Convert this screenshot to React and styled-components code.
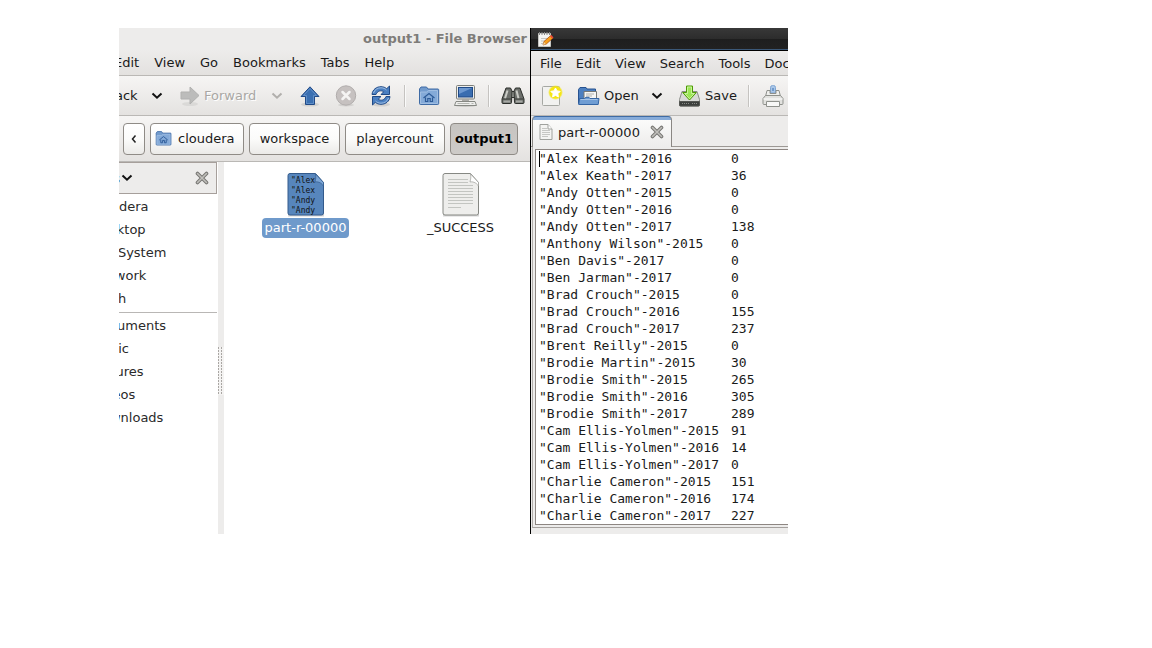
import React from "react";
import styled, { createGlobalStyle, css } from "styled-components";

const GlobalStyle = createGlobalStyle`
  * { box-sizing: border-box; }
  body { margin: 0; background: #fff; }
  body, button, textarea { font-family: "DejaVu Sans", sans-serif; font-size: 13px; color: #1a1a1a; }
  button { border: 0; padding: 0; margin: 0; background: none; white-space: nowrap; }
  svg { display: block; flex: none; }
`;

const Page = styled.main`
  padding: 28px 364px 28px 119px;
`;

const Desktop = styled.div`
  display: grid;
  grid-template-columns: 411px minmax(0, 1fr);
  overflow: hidden;
`;

const Pane = styled.section`
  display: flex;
  flex-direction: column;
  min-width: 0;
  background: #edeceb;
`;

const FilePane = styled(Pane)`
  margin-left: -28px;
  overflow: hidden;
`;

const EditorPane = styled(Pane)`
  border-left: 1px solid #000;
  overflow: hidden;
`;

const FileTitle = styled.h1`
  margin: 0;
  height: 22px;
  padding-left: 272px;
  font-size: 13px;
  line-height: 21px;
  font-weight: bold;
  color: #7e7c79;
  white-space: nowrap;
`;

const EditorTitle = styled.header`
  height: 23px;
  padding: 3px 0 0 6px;
  background: linear-gradient(#383838, #2c2c2c 50%, #1e1e1e 51%, #222);
  border-bottom: 1px solid #000;
  box-shadow: inset 0 -1px #3b5878;
`;

const MenuBar = styled.nav`
  display: flex;
  align-items: center;
  gap: ${(p) => p.$gap}px;
  height: ${(p) => p.$h}px;
  padding-top: 1px;
  padding-left: ${(p) => p.$left}px;
  background: linear-gradient(#edeceb, #e3e1df);
  border-bottom: 1px solid #bab8b5;
`;

const MenuItem = styled.button`
  flex: none;
  line-height: 16px;
`;

const Toolbar = styled.div`
  display: flex;
  align-items: center;
  height: 40px;
  padding-left: ${(p) => p.$left || 0}px;
  background: linear-gradient(#f6f5f4, #e4e2e0);
  border-bottom: 1px solid #bab8b5;
`;

const ToolButton = styled.button`
  display: flex;
  align-items: center;
  gap: 4px;
  flex: none;
  height: 36px;
  width: ${(p) => p.$w || 36}px;
  padding-left: ${(p) => p.$pad || 0}px;
  justify-content: ${(p) => (p.$pad ? "flex-start" : "center")};
  ${(p) => p.disabled && css`
    color: #a9a7a4;
    text-shadow: 1px 1px #fff;
  `}
`;

const Divider = styled.span`
  flex: none;
  width: 2px;
  height: 22px;
  margin: 0 5px;
  border-left: 1px solid #c5c3c0;
  border-right: 1px solid #fafafa;
`;

const PathBar = styled.nav`
  display: flex;
  align-items: center;
  gap: 5px;
  height: 46px;
  padding-left: 32px;
  background: linear-gradient(#f6f5f4, #e4e2e0);
  border-bottom: 1px solid #bab8b5;
`;

const PathButton = styled.button`
  display: flex;
  align-items: center;
  justify-content: ${(p) => (p.$folder ? "flex-start" : "center")};
  gap: 6px;
  flex: none;
  width: ${(p) => p.$w}px;
  height: 32px;
  padding-left: ${(p) => (p.$folder ? 4 : 0)}px;
  border: 1px solid #8f8b86;
  border-radius: 4px;
  background: linear-gradient(#fff, #fbfbfa 50%, #ebeae8);
  ${(p) => p.$active && css`
    font-weight: bold;
    color: #000;
    background: linear-gradient(#c6c4c1, #cecbc8);
  `}
`;

const Body = styled.div`
  display: flex;
  flex: 1;
  min-height: 372px;
  background: #fff;
`;

const Sidebar = styled.aside`
  width: 126px;
  flex: none;
`;

const SideHeader = styled.div`
  display: flex;
  align-items: center;
  justify-content: space-between;
  height: 32px;
  padding-right: 7px;
  background: #edeceb;
  border: 1px solid #a69f9b;
  border-left: 0;
`;

const PlacesButton = styled.button`
  display: flex;
  align-items: center;
  justify-content: flex-end;
  width: 42px;
  gap: 1px;
`;

const PlaceList = styled.ul`
  list-style: none;
  margin: 0;
  padding: 1px 0 2px 1px;
  & + & { border-top: 1px solid #b9b7b5; }
`;

const Place = styled.li`
  height: 23px;
  line-height: 24px;
`;

const PlaceLink = styled.a`
  color: #2a2a2a;
  text-decoration: none;
  white-space: nowrap;
`;

const Splitter = styled.div`
  display: flex;
  align-items: center;
  width: 7px;
  flex: none;
  padding: 46px 0 0 1px;
  background: linear-gradient(90deg, #fff 1px, #edeceb 1px);
`;

const Grip = styled.span`
  width: 6px;
  height: 48px;
  background: conic-gradient(#f4f3f2 75%, #a9a6a3 0) 0 0 / 3px 3px;
`;

const Files = styled.div`
  display: flex;
  align-items: flex-start;
  flex: 1;
  min-width: 0;
  overflow: hidden;
  padding: 11px 0 0 4px;
`;

const FileItem = styled.button`
  display: flex;
  flex-direction: column;
  align-items: center;
  flex: none;
  width: 155px;
`;

const FileLabel = styled.span`
  height: 20px;
  padding: 0 3px;
  line-height: 19px;
  border-radius: 4px;
  ${(p) => p.$selected && css`
    color: #fff;
    background: #6f9acb;
  `}
`;

const TabStrip = styled.div`
  display: flex;
  height: 31px;
  padding-left: 1px;
  border-bottom: 1px solid #9c9894;
`;

const Tab = styled.div`
  display: flex;
  align-items: center;
  gap: 5px;
  width: 140px;
  height: 31px;
  padding: 0 7px 0 6px;
  border: 1px solid #8a8783;
  border-top: 1px solid #3f6ba3;
  border-bottom: 0;
  border-radius: 4px 4px 0 0;
  background: linear-gradient(#86abd9 3px, #fbfbfa 3px, #edeceb);
`;

const TabTitle = styled.button`
  flex: 1;
  text-align: left;
`;

const EditorFrame = styled.div`
  flex: 1;
  margin-left: 1px;
  padding: 2px 0 2px 2px;
  border-left: 1px solid #b3afac;
  border-bottom: 1px solid #a5a19e;
  background: #edeceb;
`;

const TextBox = styled.textarea`
  display: block;
  width: 100%;
  height: 376px;
  padding: 0 0 0 3px;
  border: 1px solid #8d8682;
  border-right: 0;
  border-radius: 0;
  outline: 0;
  resize: none;
  overflow: hidden;
  white-space: pre;
  font-family: "DejaVu Sans Mono", monospace;
  font-size: 13px;
  line-height: 17px;
  tab-size: 192px;
  background: #fff linear-gradient(#000, #000) 3px 1px / 1px 16px no-repeat;
`;

const StatusBar = styled.footer`
  height: 6px;
  background: #edeceb;
`;

const Chevron = ({ color = "#111" }) => (
  <svg width="12" height="8" viewBox="0 0 12 8" fill="none" stroke={color} strokeWidth="2">
    <path d="M1.5 1.5 6 5.7 10.5 1.5" />
  </svg>
);

const CloseIcon = () => (
  <svg width="14" height="14" viewBox="0 0 14 14" strokeLinecap="round">
    <path d="M2.5 2.5 11.5 11.5M11.5 2.5 2.5 11.5" stroke="#777673" strokeWidth="3.600" />
    <path d="M2.5 2.5 11.5 11.5M11.5 2.5 2.5 11.5" stroke="#c0bfbb" strokeWidth="1.600" />
  </svg>
);

const ForwardIcon = () => (
  <svg width="20" height="22" viewBox="0 0 20 22">
    <ellipse cx="10" cy="19" rx="8" ry="2" fill="#dad9d7" />
    <path d="M1 7h9V2l9 8.5-9 8.5v-5H1z" fill="#bcbcbb" stroke="#b1b1b0" />
  </svg>
);

const UpIcon = () => (
  <svg width="22" height="22" viewBox="0 0 22 22">
    <ellipse cx="11" cy="19.5" rx="9" ry="2" fill="#d2d1cf" />
    <path d="M11 1.800 20 11.500h-4.500v8h-9v-8H2z" fill="#3b70b2" stroke="#204a87" strokeLinejoin="round" />
    <path d="M11 3.500 17.500 10.500h-3v8h-7v-8h-3z" fill="none" stroke="#6b97cd" strokeWidth=".8" />
  </svg>
);

const StopIcon = () => (
  <svg width="22" height="22" viewBox="0 0 22 22">
    <ellipse cx="11" cy="20" rx="8" ry="1.500" fill="#d4d2d0" />
    <circle cx="11" cy="10.500" r="9.700" fill="#c6c1c0" stroke="#b0acab" />
    <path d="m7.500 7 7 7m0-7-7 7" stroke="#f5f4f3" strokeWidth="2.500" strokeLinecap="round" />
  </svg>
);

const ReloadIcon = () => (
  <svg width="22" height="22" viewBox="0 0 22 22" strokeLinejoin="round">
    <ellipse cx="11" cy="19.500" rx="9" ry="2" fill="#d2d0ce" />
    <g fill="#4a7fc1" stroke="#204a87">
      <path d="M2 9.500C2.500 4.500 6.500 1.700 11 1.700c2.500 0 4.300.8 5.700 2L19.500 1v8.500H11l2.700-2.700c-2.700-1.900-6.200-1-7.700 2.700z" />
      <path d="M20 11.500c-.5 5-4.500 7.800-9 7.800-2.500 0-4.300-.8-5.700-2L2.500 20v-8.500H11l-2.700 2.700c2.700 1.900 6.200 1 7.700-2.700z" />
    </g>
    <path d="M3.500 8C4.500 4.500 8 2.800 11 2.800c2.500 0 4 .9 5.500 2.200M18.500 13c-1 3.500-4.500 5.200-7.500 5.200-2.500 0-4-.9-5.500-2.200" fill="none" stroke="#a9c5e6" strokeWidth=".9" />
  </svg>
);

const HomeFolderIcon = ({ size = 22 }) => (
  <svg width={size} height={size} viewBox="0 0 22 22">
    <path d="M1.500 18.500V4l1.500-2h5.500l1.500 2H20a.8.8 0 0 1 .7.800v13.700a1 1 0 0 1-1 1H2.500a1 1 0 0 1-1-1z" fill="#729bcd" stroke="#3f6ba5" />
    <path d="M2.500 7h6l2-1.500h9v13h-17z" fill="#84aad8" stroke="#a9c5e6" strokeWidth=".8" />
    <path d="m5.500 13 5.500-4.500 5.500 4.500M7.500 12.500v4h2.300v-3h2.400v3h2.300v-4" fill="none" stroke="#2c5a97" strokeWidth="1.200" />
  </svg>
);

const ComputerIcon = () => (
  <svg width="23" height="22" viewBox="0 0 23 22">
    <ellipse cx="11.500" cy="20.500" rx="11" ry="1.400" fill="#c9c8c5" />
    <rect x="2.500" y=".5" width="18" height="13.500" rx="1" fill="#eeeeec" stroke="#7c7e79" />
    <rect x="4.500" y="2.500" width="14" height="9.500" fill="#3a6db0" stroke="#204a87" />
    <path d="M5 3h13L5 9z" fill="#6d98d0" />
    <path d="M8 14h7v2H8z" fill="#aaa9a6" />
    <path d="M2 16.500h19l1.500 4H.5z" fill="#eeeeec" stroke="#868883" />
    <path d="M3.500 18.500h12m2 0h2" stroke="#b3b5b0" />
  </svg>
);

const BinocularsIcon = () => (
  <svg width="24" height="20" viewBox="0 0 24 20" stroke="#2b2e2b">
    <path d="M9.500 5.500h5v6h-5z" fill="#a2a59f" />
    <path d="M5 2h4.500l1.500 3-.5 11.500a1 1 0 0 1-1 1H2a1 1 0 0 1-1-1V13z" fill="#6d706c" />
    <path d="M19 2h-4.500L13 5l.5 11.500a1 1 0 0 0 1 1H22a1 1 0 0 0 1-1V13z" fill="#6d706c" />
    <path d="M6.500 4.500 4 12.500M15.500 4.500l2 8" stroke="#c9cbc6" strokeWidth="2" />
    <path d="M2.500 15.500h6.500m6 0h6.500" stroke="#a6a8a4" strokeWidth="2" />
    <path d="M1.500 13h9m3 0h9" strokeWidth=".8" />
  </svg>
);

const NotepadIcon = () => (
  <svg width="17" height="17" viewBox="0 0 17 17">
    <path d="M1.500 2.500h12V15.500h-12z" fill="#f4f4f2" stroke="#c5c5c1" />
    <path d="M2.500 1v3M5 1v3M7.500 1v3M10 1v3M12.500 1v3" stroke="#888" />
    <path d="M4 7.500h8M4 10h5M4 12.500h4" stroke="#c5c5c1" />
    <path d="m6 14 1-3.500 6.500-5.800 2.300 2.500L9.300 13z" fill="#f9a01c" stroke="#a34505" strokeWidth=".7" />
    <path d="m13 5.200 1.400-1.200 2.100 2.500L15.300 7.600z" fill="#ef4a38" />
    <path d="m6 14 1-3 1.800 1.900z" fill="#f3d5a0" />
  </svg>
);

const NewIcon = () => (
  <svg width="22" height="22" viewBox="0 0 22 22">
    <defs>
      <radialGradient id="glow">
        <stop offset=".75" stopColor="#f5e614" />
        <stop offset="1" stopColor="#f5e614" stopOpacity="0" />
      </radialGradient>
    </defs>
    <rect x="1.500" y="1.500" width="17" height="19" rx="1" fill="#f2f2f0" stroke="#a6a8a3" />
    <circle cx="14.500" cy="7.500" r="7.500" fill="url(#glow)" />
    <path d="m14.500 3 1.500 2.900 3.200.5-2.300 2.300.5 3.200-2.900-1.500-2.900 1.500.5-3.200-2.300-2.300 3.200-.5z" fill="#fff" stroke="#fff" strokeLinejoin="round" />
  </svg>
);

const OpenIcon = () => (
  <svg width="23" height="20" viewBox="0 0 23 20">
    <path d="M1.500 17.500v-14l1.500-2h6l1 1.500h8.500v14z" fill="#4c7fc0" stroke="#27528f" />
    <path d="M7 5.500h12.500V14H7z" fill="#f6f6f4" stroke="#777975" />
    <path d="M9 8h8M9 10h6" stroke="#b0b1ae" />
    <path d="M1.700 18.500 2.500 12.500h5l1.500-1.200h3l1 1.200h9l-.8 6z" fill="#6f9dd3" stroke="#3465a4" />
    <path d="M3.500 13.500h17" fill="none" stroke="#a5c3e6" />
  </svg>
);

const SaveIcon = () => (
  <svg width="23" height="22" viewBox="0 0 23 22">
    <path d="M4 6.500h15l2.500 8v5.500a1 1 0 0 1-1 1h-18a1 1 0 0 1-1-1v-5.500z" fill="#d8d9d6" stroke="#8a8c87" />
    <path d="M1.500 16.500h20v3.500a1 1 0 0 1-1 1h-18a1 1 0 0 1-1-1z" fill="#3c3f3d" stroke="#555753" />
    <path d="M4 18.500h8m2 0h6" stroke="#888a85" strokeDasharray="1 1" />
    <path d="M8.500 1h6v6.500h3.800L11.500 15 4.700 7.500h3.800z" fill="#9be655" stroke="#4e9a06" strokeLinejoin="round" />
    <path d="M9.500 2h4v6.500h2.800l-4.800 5.200L6.700 8.500h2.800z" fill="none" stroke="#d4f7ac" strokeWidth=".8" />
  </svg>
);

const PrinterIcon = () => (
  <svg width="22" height="22" viewBox="0 0 22 22">
    <path d="M8.500 8V2.500a2 2 0 0 1 2-2h1a2 2 0 0 1 2 2V8z" fill="#a9c6e8" stroke="#7fa5d2" />
    <path d="M11 3v3" stroke="#3a6eaf" />
    <path d="M5 5.500h3v3h6v-3h3l1.500 6h-15z" fill="#efefed" stroke="#8f918c" />
    <path d="M3.500 10.500h15l2.500 3v5a1 1 0 0 1-1 1H2a1 1 0 0 1-1-1v-5z" fill="#e2e2df" stroke="#8f918c" />
    <path d="M1.500 14h19" stroke="#fff" />
    <path d="M4.500 16.500h13v5h-13z" fill="#f8f8f7" stroke="#8f918c" />
  </svg>
);

const SmallDocIcon = () => (
  <svg width="14" height="16" viewBox="0 0 14 16">
    <path d="M1 .5h8L13 5v10.500H1z" fill="#f4f4f2" stroke="#a0a29e" />
    <path d="M9 .5V5h4" fill="#fff" stroke="#a0a29e" />
    <path d="M3 4.500h5M3 6.500h8M3 8.500h8M3 10.500h8M3 12.500h6" stroke="#c6c7c4" />
  </svg>
);

const DocumentIcon = ({ selected, lines }) => (
  <svg width="38" height="45" viewBox="0 0 38 45">
    <path d="M1 40h36v3.500H1z" fill="#bbb" opacity=".6" />
    <path d="M3 .5h25.500l8 9V40a2 2 0 0 1-2 2H3a2 2 0 0 1-2-2V2.500a2 2 0 0 1 2-2z" fill={selected ? "#5786bd" : "#eeeeec"} stroke={selected ? "#345b8c" : "#868883"} />
    <path d="M28.500 1c1 4-.5 7-.5 8 2-.5 6 0 8.500 4V9.500z" fill={selected ? "#7ba5d5" : "#fff"} stroke={selected ? "#345b8c" : "#9c9e99"} strokeWidth=".7" />
    {lines ? (
      <g fontFamily="DejaVu Sans Mono, monospace" fontSize="8" fill="#111">
        {lines.map((t, i) => <text key={i} x="4" y={10 + i * 10}>{t}</text>)}
      </g>
    ) : (
      <path d="M6 6.500h20M6 9.500h20M6 12.500h25M6 15.500h25M6 18.500h25M6 21.500h25M6 24.500h25M6 27.500h25M6 30.500h25M6 34.500h13" stroke="#c3c5c1" />
    )}
  </svg>
);

const rows = [
  ["Alex Keath", 2016, 0], ["Alex Keath", 2017, 36],
  ["Andy Otten", 2015, 0], ["Andy Otten", 2016, 0], ["Andy Otten", 2017, 138],
  ["Anthony Wilson", 2015, 0], ["Ben Davis", 2017, 0], ["Ben Jarman", 2017, 0],
  ["Brad Crouch", 2015, 0], ["Brad Crouch", 2016, 155], ["Brad Crouch", 2017, 237],
  ["Brent Reilly", 2015, 0], ["Brodie Martin", 2015, 30],
  ["Brodie Smith", 2015, 265], ["Brodie Smith", 2016, 305], ["Brodie Smith", 2017, 289],
  ["Cam Ellis-Yolmen", 2015, 91], ["Cam Ellis-Yolmen", 2016, 14], ["Cam Ellis-Yolmen", 2017, 0],
  ["Charlie Cameron", 2015, 151], ["Charlie Cameron", 2016, 174], ["Charlie Cameron", 2017, 227],
];

const fileText = rows
  .map(([name, year, count]) => `"${name}"-${year}\t${count}`)
  .join("\n");

const places = [
  ["cloudera", "Desktop", "File System", "Network", "Trash"],
  ["Documents", "Music", "Pictures", "Videos", "Downloads"],
];

function FileBrowser() {
  return (
    <FilePane>
      <FileTitle>output1 - File Browser</FileTitle>
      <MenuBar $h={26} $left={23} $gap={15}>
        {["Edit", "View", "Go", "Bookmarks", "Tabs", "Help"].map((m) => <MenuItem key={m}>{m}</MenuItem>)}
      </MenuBar>
      <Toolbar>
        <ToolButton $w={51} $pad={15}>Back</ToolButton>
        <ToolButton $w={30} aria-label="Back history"><Chevron /></ToolButton>
        <ToolButton $w={90} $pad={8} disabled><ForwardIcon />Forward</ToolButton>
        <ToolButton $w={30} disabled aria-label="Forward history"><Chevron color="#b1afac" /></ToolButton>
        <ToolButton aria-label="Up"><UpIcon /></ToolButton>
        <ToolButton $w={35} disabled aria-label="Stop"><StopIcon /></ToolButton>
        <ToolButton aria-label="Reload"><ReloadIcon /></ToolButton>
        <Divider />
        <ToolButton aria-label="Home"><HomeFolderIcon /></ToolButton>
        <ToolButton aria-label="Computer"><ComputerIcon /></ToolButton>
        <Divider />
        <ToolButton aria-label="Search"><BinocularsIcon /></ToolButton>
      </Toolbar>
      <PathBar>
        <PathButton $w={22} aria-label="Scroll left">
          <svg width="6" height="10" viewBox="0 0 6 10" fill="none" stroke="#222" strokeWidth="1.500"><path d="M4.500 1.500 1.500 5l3 3.500" /></svg>
        </PathButton>
        <PathButton $w={94} $folder><HomeFolderIcon size={17} />cloudera</PathButton>
        <PathButton $w={91}>workspace</PathButton>
        <PathButton $w={100}>playercount</PathButton>
        <PathButton $w={68} $active>output1</PathButton>
      </PathBar>
      <Body>
        <Sidebar>
          <SideHeader>
            <PlacesButton>Places<Chevron /></PlacesButton>
            <button aria-label="Close sidebar"><CloseIcon /></button>
          </SideHeader>
          {places.map((group) => (
            <PlaceList key={group[0]}>
              {group.map((p) => <Place key={p}><PlaceLink href="#">{p}</PlaceLink></Place>)}
            </PlaceList>
          ))}
        </Sidebar>
        <Splitter><Grip /></Splitter>
        <Files>
          <FileItem>
            <DocumentIcon selected lines={['"Alex', '"Alex', '"Andy', '"Andy']} />
            <FileLabel $selected>part-r-00000</FileLabel>
          </FileItem>
          <FileItem>
            <DocumentIcon />
            <FileLabel>_SUCCESS</FileLabel>
          </FileItem>
        </Files>
      </Body>
    </FilePane>
  );
}

function Editor() {
  return (
    <EditorPane>
      <EditorTitle><NotepadIcon /></EditorTitle>
      <MenuBar $h={25} $left={9} $gap={14}>
        {["File", "Edit", "View", "Search", "Tools", "Documents"].map((m) => <MenuItem key={m}>{m}</MenuItem>)}
      </MenuBar>
      <Toolbar $left={3}>
        <ToolButton aria-label="New"><NewIcon /></ToolButton>
        <ToolButton $w={72} $pad={7}><OpenIcon />Open</ToolButton>
        <ToolButton $w={30} aria-label="Recent files"><Chevron /></ToolButton>
        <ToolButton $w={71} $pad={6}><SaveIcon />Save</ToolButton>
        <Divider />
        <ToolButton aria-label="Print"><PrinterIcon /></ToolButton>
      </Toolbar>
      <TabStrip>
        <Tab>
          <SmallDocIcon />
          <TabTitle>part-r-00000</TabTitle>
          <button aria-label="Close tab"><CloseIcon /></button>
        </Tab>
      </TabStrip>
      <EditorFrame>
        <TextBox aria-label="part-r-00000" readOnly wrap="off" value={fileText} />
      </EditorFrame>
      <StatusBar />
    </EditorPane>
  );
}

export default function App() {
  return (
    <>
      <GlobalStyle />
      <Page>
        <Desktop>
          <FileBrowser />
          <Editor />
        </Desktop>
      </Page>
    </>
  );
}
